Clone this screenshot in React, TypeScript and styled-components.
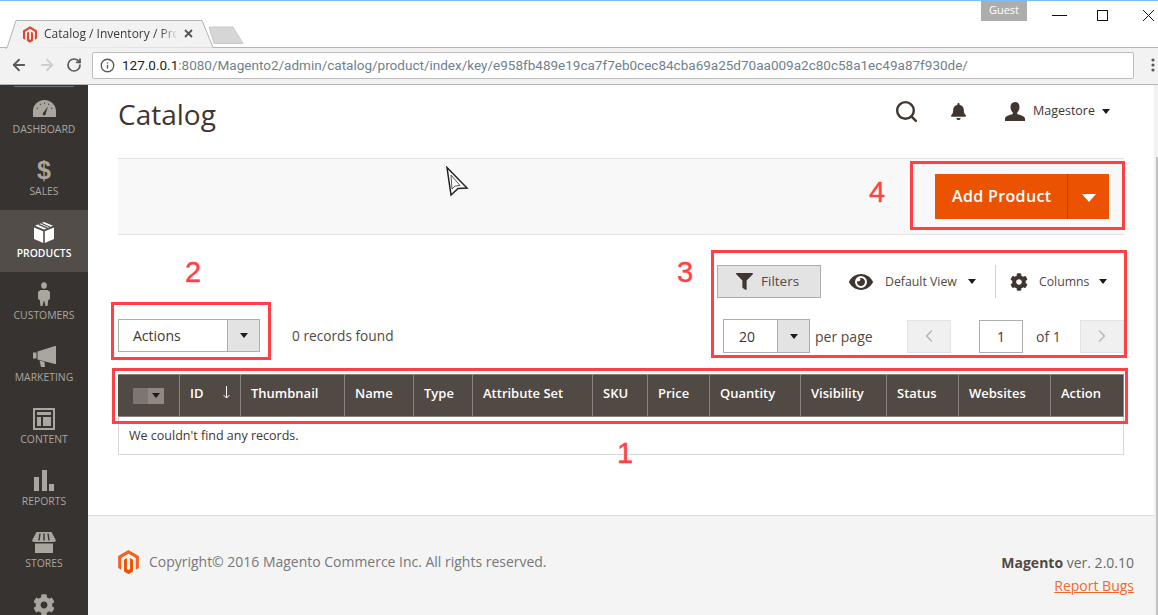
import React from "react";
import styled, { createGlobalStyle } from "styled-components";
import { FaBell, FaCog, FaEye, FaFilter } from "react-icons/fa";
import { ArrowLeft, ArrowRight, ChevronLeft, ChevronRight, Info, RotateCw, Search } from "lucide-react";

const Global = createGlobalStyle`
  html, body { margin: 0; padding: 0; background: #fff; }
  body { font-family: "Open Sans", "Noto Sans", sans-serif; color: #41362f; }
  * { box-sizing: border-box; }
`;

const Screen = styled.div`
  position: relative;
  width: 1158px;
  height: 615px;
  overflow: hidden;
  background: #fff;
  display: flex;
  flex-direction: column;
`;

const TitleBar = styled.div`
  position: relative;
  height: 48px;
  flex: none;
  border-top: 1px solid #7fbcf5;
  border-bottom: 1px solid #b4b4b4;
  background: #fff;
  display: flex;
  align-items: flex-start;
`;
const TabShape = styled.svg`
  position: absolute;
  left: 5px;
  top: 17px;
`;
const NewTab = styled.svg`
  margin: 25px 0 0 208px;
  flex: none;
`;
const TabFavicon = styled.svg`
  position: absolute;
  left: 23px;
  top: 25px;
`;
const TabLabel = styled.div`
  position: absolute;
  left: 44px;
  top: 24px;
  width: 132px;
  font-size: 12px;
  line-height: 18px;
  color: #3a3a3a;
  white-space: nowrap;
  mask-image: linear-gradient(to right, #000 88%, rgba(0, 0, 0, 0.15));
`;
const TabClose = styled.svg`
  position: absolute;
  left: 184px;
  top: 28px;
`;
const GuestBadge = styled.div`
  margin-left: auto;
  width: 46px;
  height: 20px;
  background: #adadad;
  color: #fff;
  font-size: 11px;
  line-height: 18px;
  text-align: center;
`;
const WindowControls = styled.svg`
  flex: none;
  margin: 7px 0 0 24px;
`;

const Toolbar = styled.div`
  height: 37px;
  flex: none;
  background: #f2f2f2;
  border-bottom: 1px solid #b4b4b4;
  display: flex;
  align-items: center;
  padding: 0 0 2px 10px;
`;
const NavSlot = styled.div<{ $w: number; $off?: boolean }>`
  width: ${(p) => p.$w}px;
  flex: none;
  display: flex;
  align-items: center;
  color: ${(p) => (p.$off ? "#cdcdcd" : "#5a5a5a")};
`;
const AddressBar = styled.div`
  width: 1042px;
  height: 27px;
  margin-left: 1px;
  flex: none;
  background: #fff;
  border: 1px solid #bdbdbd;
  border-radius: 2px;
  display: flex;
  align-items: center;
  padding-left: 7px;
  color: #5a5a5a;
`;
const UrlText = styled.div`
  margin-left: 7px;
  font-family: Roboto, "Open Sans", sans-serif;
  font-size: 13.52px;
  color: #6f7f8d;
  white-space: nowrap;
  b { font-weight: 400; color: #222; }
`;
const MenuDots = styled.svg`
  margin-left: 17px;
  flex: none;
`;

const Body = styled.div`
  flex: 1;
  display: flex;
  min-height: 0;
`;
const Sidebar = styled.nav`
  width: 88px;
  flex: none;
  background: #373330;
  padding-top: 1px;
  overflow: hidden;
`;
const SideRule = styled.div`
  width: 60px;
  height: 1px;
  margin: 0 auto -1px;
  background: #736f6b;
`;
const SideItem = styled.div<{ $active?: boolean }>`
  height: 62px;
  display: flex;
  flex-direction: column;
  align-items: center;
  padding-top: 10px;
  background: ${(p) => (p.$active ? "#524d49" : "transparent")};
  color: ${(p) => (p.$active ? "#fff" : "#aaa69f")};
`;
const SideIcon = styled.div`
  height: 25px;
  display: flex;
  align-items: center;
  justify-content: center;
  color: inherit;
`;
const SideLabel = styled.div<{ $active?: boolean }>`
  font-size: 10.4px;
  line-height: 16px;
  font-weight: ${(p) => (p.$active ? 600 : 400)};
  text-transform: uppercase;
  white-space: nowrap;
`;
const Dollar = styled.span`
  font-family: "Liberation Sans", sans-serif;
  font-weight: 700;
  font-size: 25px;
  line-height: 25px;
`;

const Main = styled.main`
  flex: 1;
  min-width: 0;
  display: flex;
  flex-direction: column;
`;
const Content = styled.div`
  padding: 0 30px;
  flex: 1;
`;
const PageHeader = styled.header`
  height: 73px;
  display: flex;
  align-items: flex-start;
  justify-content: space-between;
`;
const PageTitle = styled.h1`
  margin: 9px 0 0;
  font-size: 28px;
  font-weight: 400;
  line-height: 40px;
  color: #41362f;
`;
const AdminTools = styled.div`
  display: flex;
  align-items: center;
  margin: 14px 14px 0 0;
  color: #41362f;
`;
const BellIcon = styled(FaBell)`
  margin-left: 31px;
`;
const UserIcon = styled.svg`
  margin-left: 38px;
  flex: none;
`;
const UserName = styled.span`
  margin: 0 0 2px 8px;
  font-size: 12.5px;
  color: #41362f;
`;
const Caret = styled.span<{ $ml?: number; $color?: string; $size?: number }>`
  display: inline-block;
  flex: none;
  margin-left: ${(p) => p.$ml ?? 0}px;
  width: 0;
  height: 0;
  border-left: ${(p) => p.$size ?? 4}px solid transparent;
  border-right: ${(p) => p.$size ?? 4}px solid transparent;
  border-top: ${(p) => (p.$size ?? 4) + 1}px solid ${(p) => p.$color ?? "#1f1a17"};
`;

const ActionsBar = styled.section`
  height: 77px;
  background: #f8f8f8;
  border-top: 1px solid #e3e3e3;
  border-bottom: 1px solid #e3e3e3;
  display: flex;
  justify-content: flex-end;
  align-items: flex-start;
  padding: 15px 15px 0 0;
`;
const SplitButton = styled.div`
  width: 174px;
  height: 45px;
  background: #eb5202;
  color: #fff;
  display: flex;
  align-items: center;
`;
const SplitLabel = styled.div`
  width: 133px;
  height: 100%;
  border-right: 1px solid #bb4100;
  font-size: 16px;
  font-weight: 600;
  letter-spacing: 0.35px;
  line-height: 45px;
  padding-left: 17px;
  white-space: nowrap;
`;
const SplitCaret = styled.div`
  flex: 1;
  display: flex;
  justify-content: center;
  padding-top: 3px;
`;

const GridToolbar = styled.section`
  height: 139px;
  display: flex;
  justify-content: space-between;
  align-items: flex-end;
  padding-bottom: 21px;
`;
const MassActions = styled.div`
  display: flex;
  align-items: center;
  margin-bottom: 1px;
`;
const SelectBox = styled.div<{ $w: number; $h: number }>`
  width: ${(p) => p.$w}px;
  height: ${(p) => p.$h}px;
  flex: none;
  display: flex;
  border: 1px solid #adadad;
  background: #fff;
  font-size: 14px;
  color: #41362f;
`;
const SelectValue = styled.div<{ $pad: number }>`
  flex: 1;
  padding-left: ${(p) => p.$pad}px;
  display: flex;
  align-items: center;
`;
const SelectArrow = styled.div`
  width: 32px;
  flex: none;
  background: #e3e3e3;
  border-left: 1px solid #adadad;
  display: flex;
  align-items: center;
  justify-content: center;
`;
const RecordsFound = styled.div`
  margin-left: 32px;
  font-size: 13.7px;
  color: #514943;
`;
const RightTools = styled.div`
  width: 407px;
  display: flex;
  flex-direction: column;
  gap: 21px;
`;
const ToolRow = styled.div`
  display: flex;
  align-items: center;
  color: #41362f;
`;
const FilterButton = styled.div`
  width: 104px;
  height: 33px;
  flex: none;
  background: #e3e3e3;
  border: 1px solid #adadad;
  display: flex;
  align-items: center;
  padding: 0 0 1px 18px;
  font-size: 13.5px;
  color: #514943;
  gap: 8px;
`;
const ToolLabel = styled.span<{ $ml: number }>`
  margin-left: ${(p) => p.$ml}px;
  font-size: 12.3px;
  color: #514943;
  white-space: nowrap;
`;
const EyeIcon = styled(FaEye)`
  margin-left: 28px;
`;
const CogIcon = styled(FaCog)`
  margin-left: 14px;
`;
const Divider = styled.div`
  width: 1px;
  height: 33px;
  margin-left: 19px;
  background: #d1d1d1;
`;
const PerPage = styled.span`
  margin-left: 5px;
  font-size: 14px;
  color: #514943;
`;
const SizeIndent = styled.div`
  margin-left: 6px;
  display: flex;
`;
const Pager = styled.div`
  margin-left: auto;
  display: flex;
  align-items: center;
`;
const PageButton = styled.div`
  width: 44px;
  height: 33px;
  background: #f0f0f0;
  border: 1px solid #e3e3e3;
  color: #b5b5b5;
  display: flex;
  align-items: center;
  justify-content: center;
`;
const PageInput = styled.div`
  width: 44px;
  height: 33px;
  margin-left: 28px;
  border: 1px solid #adadad;
  font-size: 14px;
  line-height: 31px;
  text-align: center;
  color: #41362f;
`;
const PageTotal = styled.span`
  width: 44px;
  margin-left: 13px;
  font-size: 14px;
  color: #514943;
`;

const GridHead = styled.div`
  display: grid;
  grid-template-columns: 61px 61px 104px 69px 59px 120px 55px 62px 91px 86px 72px 92px 74px;
  height: 43px;
  background: #514943;
  border: 1px solid #8a837f;
  border-width: 1px 0;
`;
const HeadCell = styled.div`
  display: flex;
  align-items: center;
  padding: 0 0 6px 10px;
  font-size: 13px;
  font-weight: 600;
  color: #fff;
  border-left: 1px solid #8a837f;
  white-space: nowrap;
  &:first-child { border-left: none; padding: 0 0 0 15px; }
  &:last-child { border-right: 1px solid #8a837f; }
`;
const SortArrow = styled.svg`
  margin: 0 9px 0 auto;
`;
const CheckPart = styled.div`
  width: 15px;
  height: 16px;
  background: #7d7572;
`;
const CheckCaret = styled.div`
  width: 16px;
  height: 16px;
  background: #8f8883;
  display: flex;
  align-items: center;
  justify-content: center;
`;
const EmptyRow = styled.div`
  height: 38px;
  border: 1px solid #d6d6d6;
  border-top: none;
  padding-left: 10px;
  font-size: 12.5px;
  line-height: 37px;
  color: #41362f;
`;

const Footer = styled.footer`
  height: 100px;
  flex: none;
  background: #f4f4f4;
  border-top: 1px solid #dcdcdc;
  display: flex;
  justify-content: space-between;
  padding: 34px 20px 0 30px;
`;
const Copyright = styled.div`
  display: flex;
  align-items: center;
  height: 24px;
  gap: 10px;
  font-size: 13.97px;
  color: #777;
`;
const CopyrightText = styled.span`
  margin-bottom: 2px;
`;
const Version = styled.div`
  text-align: right;
  font-size: 14px;
  line-height: 20px;
  padding-top: 3px;
  color: #6a6a6a;
  b { color: #514943; font-weight: 700; }
`;
const ReportLink = styled.div`
  margin-top: 3px;
  color: #f2682a;
  text-decoration: underline;
`;

const Scrollbar = styled.div`
  width: 4px;
  flex: none;
  background: #f1f1f1;
  display: flex;
  justify-content: flex-end;
  padding-top: 72px;
`;
const ScrollThumb = styled.div`
  width: 2px;
  height: 458px;
  background: #c1c1c1;
`;

const RedBox = styled.div<{ $x: number; $y: number; $w: number; $h: number }>`
  position: absolute;
  left: ${(p) => p.$x}px;
  top: ${(p) => p.$y}px;
  width: ${(p) => p.$w}px;
  height: ${(p) => p.$h}px;
  border: 3px solid #ff4146;
  pointer-events: none;
`;
const Callout = styled.div<{ $x: number; $y: number }>`
  position: absolute;
  left: ${(p) => p.$x}px;
  top: ${(p) => p.$y}px;
  font-family: "Liberation Sans", sans-serif;
  font-size: 29px;
  line-height: 32px;
  color: #ff4146;
  -webkit-text-stroke: 0.4px #ff4146;
  text-shadow: 0 0 2px #fff, 0 0 2px #fff, 0 0 3px #fff;
`;
const Cursor = styled.svg`
  position: absolute;
  left: 445px;
  top: 166px;
`;

const Logo = ({ size = 21, color = "#f26322", accent = "#eb5202" }: { size?: number; color?: string; accent?: string }) => (
  <svg width={size} height={size * 1.15} viewBox="0 0 24 28">
    <path fill={color} d="M12 0 24 7V21L20.4 23V9.2L12 4.3 3.6 9.2V23L0 21V7Z" />
    <path fill={accent} d="M10.2 9.3V22.1L12 23.2 13.8 22.1V9.3L17.2 11.2V24.8L12 28 6.8 24.8V11.2Z" />
  </svg>
);

const GaugeIcon = () => (
  <svg width="23" height="17" viewBox="0 0 23 17" fill="currentColor">
    <path fillRule="evenodd" d="M11.5 0C5 0 0 5 0 11v6h23v-6C23 5 18 0 11.5 0ZM4 7.5l1 .6-.5.9-1-.6ZM7.5 3.6l.6 1-.9.5-.6-1ZM11 2.6h1v1.2h-1ZM15.5 3.6l.9.5-.6 1-.9-.5ZM19 7.5l.5.9-1 .6-.5-.9ZM15 6.5l-2.2 6.8a1.6 1.6 0 1 1-2.4-.9Z" />
  </svg>
);
const BoxIcon = () => (
  <svg width="20" height="21" viewBox="0 0 20 21" fill="#fff">
    <path d="M10 0 19 3.8 10 7.6 1 3.8Z" />
    <path d="M0 5.5 9.2 9.3V21L0 17Z" />
    <path d="M20 5.5 10.8 9.3V21L20 17Z" />
    <path d="M4.5 2.4 13.5 6.2" stroke="#524d49" strokeWidth="1.4" />
    <path d="M7.2 1.2 16 5" stroke="#524d49" strokeWidth="1.2" />
  </svg>
);
const PersonIcon = () => (
  <svg width="12" height="25" viewBox="0 0 12 25" fill="currentColor">
    <ellipse cx="6" cy="3.500" rx="2.800" ry="3.300" />
    <path d="M2.500 8h7L12 10v7l-1.800 1-.7 6H7.500L6.300 19h-.6L4.500 24h-2L1.800 18 0 17v-7Z" />
  </svg>
);
const MegaphoneIcon = () => (
  <svg width="23" height="21" viewBox="0 0 23 21" fill="currentColor">
    <path d="M0 6.500h3.500v6H0Z" />
    <path d="M4.500 5.500 22 0 23 0V18H22L4.500 13.500Z" />
    <path d="M6.500 14.500 11.500 15.800 12 21H8Z" />
  </svg>
);
const LayoutIcon = () => (
  <svg width="22" height="22" viewBox="0 0 22 22" fill="currentColor">
    <path fillRule="evenodd" d="M0 0h22v22H0Zm2 2v18h18V2Z" />
    <path d="M4 4h14v3H4ZM4 9h4v9H4ZM10 9h8v9h-8Z" />
  </svg>
);
const BarsIcon = () => (
  <svg width="20" height="21" viewBox="0 0 20 21" fill="currentColor">
    <path d="M0 7h5v14H0ZM8 0h5v21H8ZM15 14h5v7h-5Z" />
  </svg>
);
const StoreIcon = () => (
  <svg width="24" height="21" viewBox="0 0 24 21" fill="currentColor">
    <path d="M4.500 0h15L24 8.500a3 3 0 0 1-2.500 1.600H2.500A3 3 0 0 1 0 8.500Z" />
    <path d="M8 1.500 7 8.500M12 1.500V8.500M16 1.500l1 7" stroke="#373330" strokeWidth="1.400" />
    <path d="M3 11.500h18V21H3Z" />
  </svg>
);

const NAV: { label: string; icon: React.ReactNode; active?: boolean }[] = [
  { label: "Dashboard", icon: <GaugeIcon /> },
  { label: "Sales", icon: <Dollar>$</Dollar> },
  { label: "Products", icon: <BoxIcon />, active: true },
  { label: "Customers", icon: <PersonIcon /> },
  { label: "Marketing", icon: <MegaphoneIcon /> },
  { label: "Content", icon: <LayoutIcon /> },
  { label: "Reports", icon: <BarsIcon /> },
  { label: "Stores", icon: <StoreIcon /> },
  { label: "", icon: <FaCog size={22} /> },
];

const COLUMNS = ["Thumbnail", "Name", "Type", "Attribute Set", "SKU", "Price", "Quantity", "Visibility", "Status", "Websites", "Action"];

export default function App() {
  return (
    <Screen>
      <Global />
      <TitleBar>
        <TabShape width="210" height="31" viewBox="0 0 210 31">
          <path d="M0 30H2L11 2.500H197L208 29.500" fill="#f2f2f2" stroke="#b4b4b4" strokeWidth="1" />
          <path d="M2 30.500H208" stroke="#f2f2f2" strokeWidth="1.500" />
        </TabShape>
        <TabFavicon width="14" height="17" viewBox="0 0 24 28">
          <path fill="#e3432a" d="M12 0 24 7V21L20.400 23V9.200L12 4.300 3.600 9.200V23L0 21V7Z" />
          <path fill="#e3432a" d="M10.200 9.300V22.100L12 23.200 13.800 22.100V9.300L17.200 11.200V24.800L12 28 6.800 24.800V11.200Z" />
        </TabFavicon>
        <TabLabel>Catalog / Inventory / Pro</TabLabel>
        <TabClose width="9" height="9" viewBox="0 0 9 9">
          <path d="M1 1 8 8M8 1 1 8" stroke="#555" strokeWidth="1.800" />
        </TabClose>
        <NewTab width="36" height="19" viewBox="0 0 36 19">
          <path d="M1 1H25L35 17.500H6Z" fill="#d6d6d6" stroke="#c8c8c8" />
        </NewTab>
        <GuestBadge>Guest</GuestBadge>
        <WindowControls width="107" height="14" viewBox="0 0 107 14">
          <path d="M1 7.500H16" stroke="#111" />
          <rect x="46.500" y="2.500" width="10" height="10" fill="none" stroke="#111" />
          <path d="M92 2 103 13M103 2 92 13" stroke="#111" />
        </WindowControls>
      </TitleBar>
      <Toolbar>
        <NavSlot $w={28}><ArrowLeft size={18} strokeWidth={2.400} /></NavSlot>
        <NavSlot $w={28} $off><ArrowRight size={18} strokeWidth={2.400} /></NavSlot>
        <NavSlot $w={25}><RotateCw size={16} strokeWidth={2.600} /></NavSlot>
        <AddressBar>
          <Info size={15} strokeWidth={2.200} />
          <UrlText><b>127.0.0.1</b>:8080/Magento2/admin/catalog/product/index/key/e958fb489e19ca7f7eb0cec84cba69a25d70aa009a2c80c58a1ec49a87f930de/</UrlText>
        </AddressBar>
        <MenuDots width="4" height="14" viewBox="0 0 4 14" fill="#5a5a5a">
          <circle cx="2" cy="2" r="1.600" />
          <circle cx="2" cy="7" r="1.600" />
          <circle cx="2" cy="12" r="1.600" />
        </MenuDots>
      </Toolbar>
      <Body>
        <Sidebar>
          <SideRule />
          {NAV.map((n, i) => (
            <SideItem key={i} $active={n.active}>
              <SideIcon>{n.icon}</SideIcon>
              {n.label && <SideLabel $active={n.active}>{n.label}</SideLabel>}
            </SideItem>
          ))}
        </Sidebar>
        <Main>
          <Content>
            <PageHeader>
              <PageTitle>Catalog</PageTitle>
              <AdminTools>
                <Search size={25} strokeWidth={2.300} />
                <BellIcon size={17} />
                <UserIcon width="20" height="19" viewBox="0 0 20 19" fill="currentColor">
                  <path d="M10 0c3 0 4.500 2.200 4.500 5 0 2.300-1 4.300-2.300 5.500v1.500c2.800 1 7.800 2 7.800 4.500V19H0v-2.500c0-2.500 5-3.500 7.800-4.500v-1.500C6.500 9.300 5.500 7.300 5.500 5 5.500 2.200 7 0 10 0Z" />
                </UserIcon>
                <UserName>Magestore</UserName>
                <Caret $ml={7} />
              </AdminTools>
            </PageHeader>
            <ActionsBar>
              <SplitButton>
                <SplitLabel>Add Product</SplitLabel>
                <SplitCaret><Caret $color="#fff" $size={7} /></SplitCaret>
              </SplitButton>
            </ActionsBar>
            <GridToolbar>
              <MassActions>
                <SelectBox $w={142} $h={33}>
                  <SelectValue $pad={14}>Actions</SelectValue>
                  <SelectArrow><Caret /></SelectArrow>
                </SelectBox>
                <RecordsFound>0 records found</RecordsFound>
              </MassActions>
              <RightTools>
                <ToolRow>
                  <FilterButton><FaFilter size={17} color="#41362f" />Filters</FilterButton>
                  <EyeIcon size={24} />
                  <ToolLabel $ml={12}>Default View</ToolLabel>
                  <Caret $ml={11} />
                  <Divider />
                  <CogIcon size={18} />
                  <ToolLabel $ml={11}>Columns</ToolLabel>
                  <Caret $ml={10} />
                </ToolRow>
                <ToolRow>
                  <SizeIndent>
                    <SelectBox $w={87} $h={34}>
                      <SelectValue $pad={15}>20</SelectValue>
                      <SelectArrow><Caret /></SelectArrow>
                    </SelectBox>
                  </SizeIndent>
                  <PerPage>per page</PerPage>
                  <Pager>
                    <PageButton><ChevronLeft size={20} strokeWidth={1.500} /></PageButton>
                    <PageInput>1</PageInput>
                    <PageTotal>of 1</PageTotal>
                    <PageButton><ChevronRight size={20} strokeWidth={1.500} /></PageButton>
                  </Pager>
                </ToolRow>
              </RightTools>
            </GridToolbar>
            <GridHead>
              <HeadCell>
                <CheckPart />
                <CheckCaret><Caret /></CheckCaret>
              </HeadCell>
              <HeadCell>
                ID
                <SortArrow width="9" height="13" viewBox="0 0 9 13">
                  <path d="M4.500 0V12M1.500 9 4.500 12 7.500 9" stroke="#fff" fill="none" />
                </SortArrow>
              </HeadCell>
              {COLUMNS.map((c) => (
                <HeadCell key={c}>{c}</HeadCell>
              ))}
            </GridHead>
            <EmptyRow>We couldn't find any records.</EmptyRow>
          </Content>
          <Footer>
            <Copyright>
              <Logo />
              <CopyrightText>Copyright© 2016 Magento Commerce Inc. All rights reserved.</CopyrightText>
            </Copyright>
            <Version>
              <div><b>Magento</b> ver. 2.0.10</div>
              <ReportLink>Report Bugs</ReportLink>
            </Version>
          </Footer>
        </Main>
        <Scrollbar><ScrollThumb /></Scrollbar>
      </Body>

      <RedBox $x={910} $y={161} $w={215} $h={69} />
      <RedBox $x={111} $y={302} $w={160} $h={58} />
      <RedBox $x={711} $y={250} $w={416} $h={108} />
      <RedBox $x={112} $y={368} $w={1016} $h={56} />
      <Callout $x={869} $y={176}>4</Callout>
      <Callout $x={185} $y={256}>2</Callout>
      <Callout $x={677} $y={256}>3</Callout>
      <Callout $x={617} $y={437}>1</Callout>
      <Cursor width="24" height="32" viewBox="0 0 24 32">
        <path d="M2 1.500 22 22 13 22.500 6 29Z" fill="#fff" stroke="#222" strokeWidth="1.500" />
        <path d="M6 9 15 19.500 10 20 7 23Z" fill="#fff" stroke="#555" strokeWidth="1" />
      </Cursor>
    </Screen>
  );
}
